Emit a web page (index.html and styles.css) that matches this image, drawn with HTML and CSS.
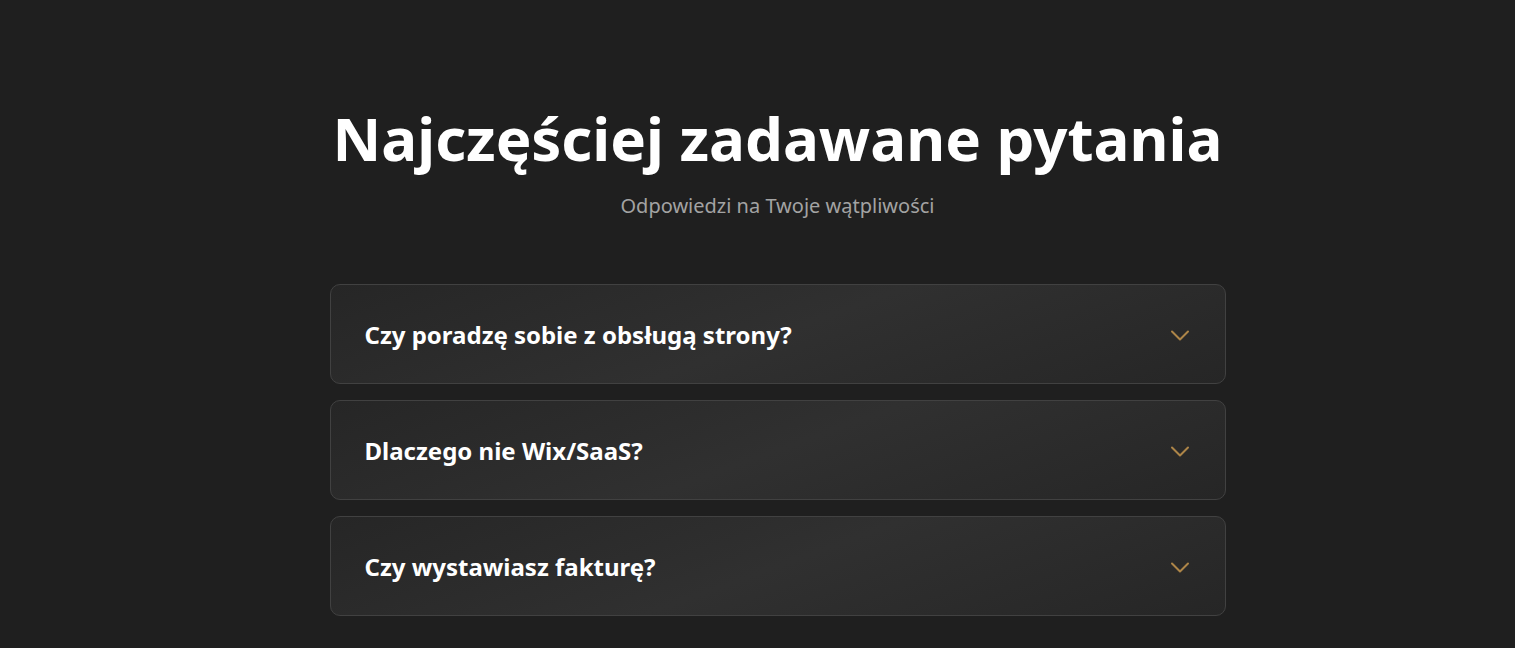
FILE: index.html
```html
<!DOCTYPE html>
<html lang="pl">
<head>
<meta charset="utf-8">
<link rel="stylesheet" href="styles.css">
</head>
<body>
<section class="faq">
  <div class="faq-inner">
    <h2 class="faq-title">Najczęściej zadawane pytania</h2>
    <p class="faq-sub">Odpowiedzi na Twoje wątpliwości</p>
    <div class="faq-list">
      <div class="faq-item">
        <span class="faq-q">Czy poradzę sobie z obsługą strony?</span>
        <svg class="chev" width="20" height="12" viewBox="0 0 20 12"><path d="M2 1.5 L10 9.5 L18 1.5" fill="none" stroke="#ad8548" stroke-width="2" stroke-linecap="round" stroke-linejoin="round"/></svg>
      </div>
      <div class="faq-item">
        <span class="faq-q">Dlaczego nie Wix/SaaS?</span>
        <svg class="chev" width="20" height="12" viewBox="0 0 20 12"><path d="M2 1.5 L10 9.5 L18 1.5" fill="none" stroke="#ad8548" stroke-width="2" stroke-linecap="round" stroke-linejoin="round"/></svg>
      </div>
      <div class="faq-item">
        <span class="faq-q">Czy wystawiasz fakturę?</span>
        <svg class="chev" width="20" height="12" viewBox="0 0 20 12"><path d="M2 1.5 L10 9.5 L18 1.5" fill="none" stroke="#ad8548" stroke-width="2" stroke-linecap="round" stroke-linejoin="round"/></svg>
      </div>
    </div>
  </div>
</section>
</body>
</html>
```
FILE: styles.css
```css
html, body {
  margin: 0;
  padding: 0;
  background: #1f1f1f;
  font-family: "Noto Sans", "Open Sans", sans-serif;
  color: #fff;
}
.faq {
  padding: 96px 0 40px 40px;
}
.faq-inner {
  width: 896px;
  margin: 0 auto;
  text-align: center;
}
.faq-title {
  margin: 0;
  font-size: 60px;
  font-weight: 700;
  line-height: 84px;
  white-space: nowrap;
}
.faq-sub {
  margin: 12px 0 0;
  font-size: 20px;
  line-height: 28px;
  color: #a3a3a3;
}
.faq-list {
  margin-top: 64px;
  display: flex;
  flex-direction: column;
  gap: 16px;
  text-align: left;
}
.faq-item {
  box-sizing: border-box;
  height: 100px;
  border: 1.5px solid #414141;
  border-radius: 10px;
  background: linear-gradient(160deg, #262626 0%, #303030 50%, #262626 100%);
  display: flex;
  align-items: center;
  justify-content: space-between;
  padding: 0 35px 0 34px;
}
.faq-q {
  font-size: 24px;
  font-weight: 700;
  color: #fff;
}
.chev {
  display: block;
  margin-top: 3px;
}
```
